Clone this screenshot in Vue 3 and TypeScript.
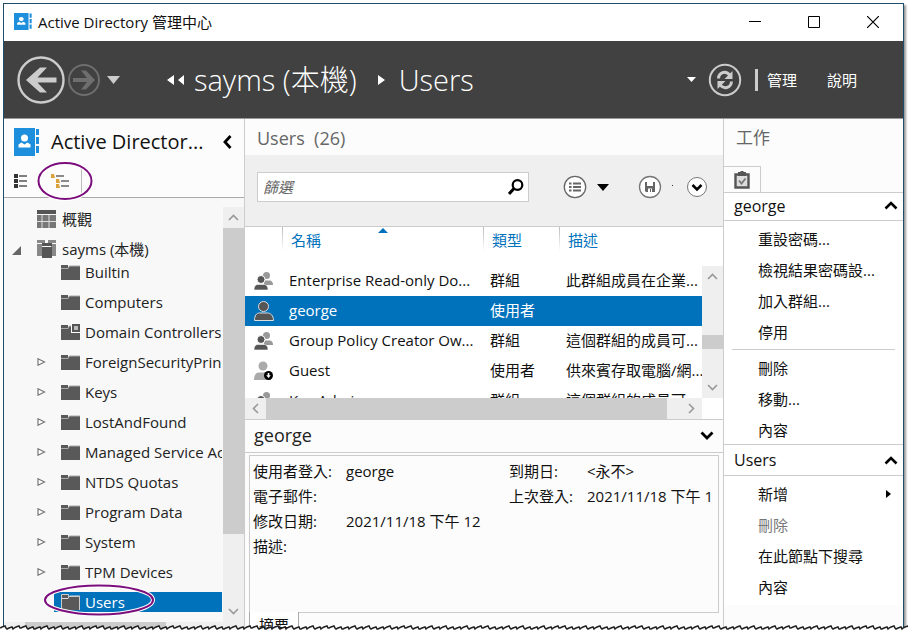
<script setup lang="ts">
import { ref } from 'vue'

interface TreeNode {
  name: string
  expandable: boolean
  controller?: boolean
}
interface DirectoryEntry {
  name: string
  kind: 'group' | 'user' | 'disabled'
  type: string
  description: string
}
interface Task {
  label: string
  disabled?: boolean
  submenu?: boolean
}

const nodes: TreeNode[] = [
  { name: 'Builtin', expandable: false },
  { name: 'Computers', expandable: false },
  { name: 'Domain Controllers', expandable: false, controller: true },
  { name: 'ForeignSecurityPrincipals', expandable: true },
  { name: 'Keys', expandable: true },
  { name: 'LostAndFound', expandable: true },
  { name: 'Managed Service Accounts', expandable: true },
  { name: 'NTDS Quotas', expandable: true },
  { name: 'Program Data', expandable: true },
  { name: 'System', expandable: true },
  { name: 'TPM Devices', expandable: true },
  { name: 'Users', expandable: false },
]
const currentNode = ref('Users')

const entries: DirectoryEntry[] = [
  { name: 'Enterprise Read-only Do...', kind: 'group', type: '群組', description: '此群組成員在企業...' },
  { name: 'george', kind: 'user', type: '使用者', description: '' },
  { name: 'Group Policy Creator Ow...', kind: 'group', type: '群組', description: '這個群組的成員可...' },
  { name: 'Guest', kind: 'disabled', type: '使用者', description: '供來賓存取電腦/網...' },
  { name: 'Key Admins', kind: 'group', type: '群組', description: '這個群組的成員可...' },
]
const currentEntry = ref('george')
const filter = ref('')

const entryTasks: Task[][] = [
  [{ label: '重設密碼...' }, { label: '檢視結果密碼設...' }, { label: '加入群組...' }, { label: '停用' }],
  [{ label: '刪除' }, { label: '移動...' }, { label: '內容' }],
]
const nodeTasks: Task[] = [
  { label: '新增', submenu: true },
  { label: '刪除', disabled: true },
  { label: '在此節點下搜尋' },
  { label: '內容' },
]

// Ragged line along the bottom of the window, long enough for wide screens.
const jitter = [0, 1, 0, 0, 1, 1, 0, 1, 0, 1, 1]
const tear = Array.from({ length: 560 }, (_, i) => {
  const x = i * 7
  const y = 4 + jitter[i % jitter.length]
  return `${x},${y} ${x + 2},${y - 1} ${x + 5},${y - 2} ${x + 6},${y}`
}).join(' ')
</script>

<template>
  <div class="page">
    <div class="window">
      <header class="titlebar">
        <svg class="book" width="18" height="17" viewBox="0 0 26 28" preserveAspectRatio="none">
          <path fill="#1e8fdc" d="M0 0h21v28H0zM22.500 1h3v7h-3zM22.500 10h3v7h-3zM22.500 19h3v7h-3z" />
          <circle cx="10.500" cy="10" r="3.500" fill="#fff" /><path fill="#fff" d="M4.500 19.500v-3l3-2 3 2 3-2 3 2v3z" />
        </svg>
        <h1>Active Directory 管理中心</h1>
        <div class="controls">
          <button aria-label="最小化"><svg width="12" height="12"><path d="M0 5.500h12" stroke="#000" /></svg></button>
          <button aria-label="最大化"><svg width="12" height="12"><path d="M.5.5h11v11H.5z" fill="none" stroke="#000" /></svg></button>
          <button aria-label="關閉"><svg width="12" height="12"><path d="M0 0l12 12M12 0L0 12" stroke="#000" stroke-width="1.200" /></svg></button>
        </div>
      </header>

      <nav class="banner">
        <button aria-label="上一頁">
          <svg width="48" height="48" viewBox="0 0 48 48"><circle cx="24" cy="24" r="22.500" fill="none" stroke="#ccc" stroke-width="2.400" /><path d="M9 24L23 11.500h7L20.500 21.500H39.500v5H20.500l9.500 10h-7z" fill="#ccc" /></svg>
        </button>
        <button aria-label="下一頁" class="forward">
          <svg width="34" height="34" viewBox="0 0 34 34"><circle cx="17" cy="17" r="15" fill="none" stroke="#6e6e6e" stroke-width="2" /><path d="M28 17l-9 9.500h-5l6-7.500H6v-4h14l-6-7.500h5z" fill="#6e6e6e" /></svg>
        </button>
        <button aria-label="瀏覽記錄" class="history"><svg width="13" height="8"><path d="M0 0h13L6.500 8z" fill="#ccc" /></svg></button>
        <div class="crumbs">
          <svg width="17" height="10"><path d="M7 0v10L0 5zM17 0v10l-6-5z" fill="#fff" /></svg>
          <a href="#sayms">sayms (本機)</a>
          <svg class="next" width="7" height="10"><path d="M0 0l7 5-7 5z" fill="#fff" /></svg>
          <a href="#users">Users</a>
        </div>
        <button aria-label="路徑" class="path"><svg width="9" height="5"><path d="M0 0h9L4.500 5z" fill="#fff" /></svg></button>
        <button aria-label="重新整理">
          <svg width="34" height="34" viewBox="0 0 34 34"><circle cx="17" cy="17" r="15.200" fill="none" stroke="#ccc" stroke-width="2" /><g fill="none" stroke="#ccc" stroke-width="3"><path d="M10.500 15.500c.5-7 8-8 11.500-3M23.500 18.500c-.5 7-8 8-11.500 3" /></g><path d="M24.500 8v8h-8zM9.500 26v-8h8z" fill="#ccc" /></svg>
        </button>
        <i class="bar"></i>
        <button class="menu">管理</button>
        <button class="menu last">說明</button>
      </nav>

      <div class="body">
        <aside class="sidebar">
          <div class="side-title">
            <svg width="26" height="28" viewBox="0 0 26 28">
              <path fill="#1e8fdc" d="M0 0h21v28H0zM22 1h3v6h-3zM22 9h3v7h-3zM22 18h3v7h-3z" />
              <circle cx="10.500" cy="10" r="3.500" fill="#fff" /><path fill="#fff" d="M4.500 19.500v-3l3-2 3 2 3-2 3 2v3z" />
            </svg>
            <h2>Active Director...</h2>
            <button aria-label="摺疊"><svg width="9" height="14"><path d="M7.500 1L2 7l5.500 6" fill="none" stroke="#000" stroke-width="2.800" /></svg></button>
          </div>
          <div class="views">
            <button aria-label="清單檢視"><svg width="14" height="14"><path d="M0 0h4v4H0zM0 5h4v4H0zM0 10h4v4H0z" fill="#333" /><path d="M5 2h8M5 7h8M5 12h8" stroke="#555" stroke-width="1.500" /></svg></button>
            <button aria-label="樹狀檢視" class="tree-view">
              <svg width="18" height="15"><path d="M0 0h3l1 4H0zM5 5h3l1 4H5zM5 10h3l1 4H5z" fill="#dba23c" /><path d="M5 2h8M10 7h8M10 12h8" stroke="#666" stroke-width="1.500" /></svg>
            </button>
            <svg class="ring" width="58" height="40"><ellipse cx="29" cy="20" rx="26.500" ry="18" fill="none" stroke="#fff" stroke-width="4" /><ellipse cx="29" cy="20" rx="26.500" ry="18" fill="none" stroke="#7b0d7d" stroke-width="2" /></svg>
          </div>
          <div class="tree-area">
            <div class="tree">
              <button class="root">
                <svg width="19" height="18"><path d="M0 0h19v4H0z" fill="#555" /><path d="M0 5h19v13H0z" fill="#777" /><path d="M5 5v13M12 5v13M0 11.500h19" stroke="#ddd" /></svg>
                <span>概觀</span>
              </button>
              <button class="root">
                <svg class="open" width="9" height="9"><path d="M9 0v9H0z" fill="#666" /></svg>
                <svg width="19" height="18"><path d="M0 0h8v3H0zM0 4h5v12H0zM11 0h8v3h-8zM14 4h5v12h-5z" fill="#888" /><path d="M5 3h10v3H5zM5 7h10v11H5z" fill="#555" /></svg>
                <span>sayms (本機)</span>
              </button>
              <ul>
                <li v-for="node in nodes" :key="node.name">
                  <svg v-if="node.expandable" class="twist" width="9" height="8"><path d="M1 .8L7.500 4 1 7.200z" fill="#fff" stroke="#777" stroke-width="1.200" /></svg>
                  <button :class="['leaf', { current: node.name === currentNode }]" @click="currentNode = node.name">
                    <svg width="19" height="16">
                      <path d="M0 1h7v3H0zM8 2h11v14H0V5h7z" fill="#595959" />
                      <path d="M0 4.500h7L8.500 2H19" fill="none" :stroke="node.name === currentNode ? '#ddd' : '#aaa'" />
                      <path v-if="node.name === currentNode" d="M.5 16V.5h7v2h11V16" fill="none" stroke="#ccc" />
                      <template v-if="node.controller"><path d="M10 0h9v9h-9z" fill="#fff" /><path d="M11 0h8v8h-8z" fill="#555" /><path d="M13 2h4v4h-4z" fill="#bbb" /></template>
                    </svg>
                    <span>{{ node.name }}</span>
                  </button>
                </li>
              </ul>
              <svg class="ring users" width="114" height="34"><ellipse cx="57" cy="17" rx="54" ry="14.500" fill="none" stroke="#fff" stroke-width="4" /><ellipse cx="57" cy="17" rx="54" ry="14.500" fill="none" stroke="#7b0d7d" stroke-width="2" /></svg>
            </div>
            <div class="vscroll side">
              <span class="arrow"><svg width="11" height="7"><path d="M1 6l4.500-4.500L10 6" /></svg></span>
              <i class="thumb"></i>
              <span class="arrow end"><svg width="11" height="7"><path d="M1 1l4.500 4.500L10 1" /></svg></span>
            </div>
          </div>
          <div class="hscroll-side"><i></i></div>
        </aside>

        <main class="main">
          <h2 class="heading">Users&nbsp; (26)</h2>
          <div class="toolbar">
            <label class="search">
              <input v-model="filter" type="text" placeholder="篩選" aria-label="篩選" />
              <svg width="16" height="16"><circle cx="9.500" cy="6" r="4.800" fill="none" stroke="#000" stroke-width="2.200" /><path d="M6 9.500L1 15" stroke="#000" stroke-width="3" /></svg>
            </label>
            <button aria-label="檢視"><svg width="24" height="24"><circle cx="12" cy="12" r="10.700" fill="#fff" stroke="#666" stroke-width="1.300" /><path d="M6 8.500h2.500M6 12h2.500M6 15.500h2.500M10 8.500h8M10 12h8M10 15.500h8" stroke="#666" stroke-width="2.200" /></svg></button>
            <button aria-label="檢視選項" class="drop"><svg width="12" height="7"><path d="M0 0h12L6 7z" fill="#000" /></svg></button>
            <button aria-label="儲存"><svg width="24" height="24"><circle cx="12" cy="12" r="10.500" fill="#fff" stroke="#777" stroke-width="1.300" /><path d="M7 7h10v10H8l-1-1z" fill="#666" /><path d="M9 7h6v4H9zM10 13.500h4V17h-4z" fill="#fff" /><path d="M12 14h1v3h-1z" fill="#666" /></svg></button>
            <i class="dot"></i>
            <button aria-label="展開"><svg width="22" height="22"><circle cx="11" cy="11" r="9.500" fill="#fff" stroke="#777" /><path d="M6.500 9l4.500 4.500L15.500 9" fill="none" stroke="#000" stroke-width="2.600" /></svg></button>
          </div>

          <section class="list">
            <div class="list-view">
              <table>
                <colgroup><col class="c-icon" /><col class="c-name" /><col class="c-type" /><col /></colgroup>
                <thead>
                  <tr>
                    <th aria-label="圖示"></th>
                    <th>名稱<svg class="sort" width="10" height="5"><path d="M5 0l5 5H0z" fill="#0072bc" /></svg></th>
                    <th>類型</th>
                    <th>描述</th>
                  </tr>
                </thead>
                <tbody>
                  <tr v-for="entry in entries" :key="entry.name" :class="{ selected: entry.name === currentEntry }" @click="currentEntry = entry.name">
                    <td class="icon">
                      <svg v-if="entry.kind === 'group'" width="20" height="20"><g fill="#999"><circle cx="12.500" cy="4.500" r="3.500" /><path d="M10 14V9.500h5c3 0 4 2 4 4.500z" /></g><g fill="#555"><circle cx="7" cy="8.500" r="4" stroke="#fff" /><path d="M0 19c0-4 2-5.500 4-5.500h6c2 0 4 1.500 4 5.500z" stroke="#fff" stroke-width=".6" /></g></svg>
                      <svg v-else-if="entry.kind === 'user'" width="20" height="20"><g fill="#555" stroke="#ddd"><circle cx="9.500" cy="5.500" r="5" /><path d="M.5 19.500c0-5 2-7.500 5-7.500h8c3 0 6 2.500 6 7.500z" /></g></svg>
                      <svg v-else width="20" height="20"><g fill="#aaa"><circle cx="9" cy="5" r="4.500" /><path d="M0 19c0-5 2-7.500 5-7.500h8c2 0 4 2.500 4 7.500z" /></g><circle cx="14.500" cy="14.500" r="4.500" fill="#000" /><path d="M13.700 12h1.600v2.300h1.500L14.500 17l-2.300-2.700h1.500z" fill="#fff" /></svg>
                    </td>
                    <td>{{ entry.name }}</td>
                    <td>{{ entry.type }}</td>
                    <td>{{ entry.description }}</td>
                  </tr>
                </tbody>
              </table>
            </div>
            <div class="vscroll inner">
              <span class="arrow"><svg width="11" height="7"><path d="M1 6l4.500-4.500L10 6" /></svg></span>
              <i class="thumb"></i>
              <span class="arrow end"><svg width="11" height="7"><path d="M1 1l4.500 4.500L10 1" /></svg></span>
            </div>
            <div class="hscroll">
              <span class="arrow"><svg width="7" height="11"><path d="M6 1L1.500 5.500 6 10" /></svg></span>
              <i class="thumb"></i>
              <span class="arrow"><svg width="7" height="11"><path d="M1 1l4.500 4.500L1 10" /></svg></span>
            </div>
          </section>

          <section class="details">
            <div class="details-head">
              <h3>george</h3>
              <button aria-label="摺疊"><svg width="14" height="9"><path d="M1.500 1.500L7 7l5.500-5.500" fill="none" stroke="#000" stroke-width="2.800" /></svg></button>
            </div>
            <div class="details-box">
              <dl>
                <dt>使用者登入:</dt><dd>george</dd>
                <dt>電子郵件:</dt><dd></dd>
                <dt>修改日期:</dt><dd>2021/11/18 下午 12</dd>
                <dt>描述:</dt><dd></dd>
              </dl>
              <dl class="second">
                <dt>到期日:</dt><dd>&lt;永不&gt;</dd>
                <dt>上次登入:</dt><dd>2021/11/18 下午 1</dd>
              </dl>
            </div>
            <div class="tabs"><button>摘要</button></div>
          </section>
        </main>

        <aside class="tasks">
          <h2 class="heading">工作</h2>
          <div class="task-tab">
            <button aria-label="工作清單"><svg width="16" height="18"><path d="M1.500 3.500h13v13h-13z" fill="#ddd" stroke="#555" stroke-width="2.400" /><path d="M4 1h2l1-1h2l1 1h2v4H4z" fill="#555" /><path d="M5 9.500l2.500 3 4-5" fill="none" stroke="#777" stroke-width="1.800" /></svg></button>
          </div>
          <div class="task-head"><h3>george</h3><button aria-label="摺疊"><svg width="14" height="9"><path d="M1.500 7.500L7 2l5.500 5.500" fill="none" stroke="#000" stroke-width="2.600" /></svg></button></div>
          <div class="task-list">
            <ul v-for="(group, index) in entryTasks" :key="index">
              <li v-for="task in group" :key="task.label"><button>{{ task.label }}</button></li>
            </ul>
          </div>
          <div class="task-head"><h3>Users</h3><button aria-label="摺疊"><svg width="14" height="9"><path d="M1.500 7.500L7 2l5.500 5.500" fill="none" stroke="#000" stroke-width="2.600" /></svg></button></div>
          <div class="task-list">
            <ul>
              <li v-for="task in nodeTasks" :key="task.label">
                <button :disabled="task.disabled">{{ task.label }}<svg v-if="task.submenu" width="5" height="8"><path d="M0 0l5 4-5 4z" fill="#000" /></svg></button>
              </li>
            </ul>
          </div>
        </aside>
      </div>
    </div>
    <svg class="tear" width="100%" height="8"><polygon :points="`0,8 ${tear} 3920,8`" fill="#fff" /><polyline :points="tear" fill="none" stroke="#222" stroke-width="1.500" /></svg>
  </div>
</template>

<style>
body {
  margin: 0;
  background: #fff;
}
</style>

<style scoped>
* {
  box-sizing: border-box;
}
.page {
  position: relative;
  height: 100vh;
  padding: 3px 4px 0 3px;
  overflow: hidden;
  font: 15px/20px "Open Sans", "Noto Sans CJK TC", sans-serif;
  color: #111;
}
.window {
  display: flex;
  flex-direction: column;
  height: 100%;
  border: 1px solid #1f4e6b;
  border-bottom: 0;
  box-shadow: 2px 2px 2px #999;
  background: #fcfcfc;
}
h1, h2, h3, ul, dl, dd {
  margin: 0;
  padding: 0;
  font-size: 15px;
  font-weight: 400;
}
ul {
  list-style: none;
}
button {
  display: flex;
  align-items: center;
  padding: 0;
  border: 0;
  background: none;
  font: inherit;
  color: inherit;
  white-space: nowrap;
}
svg {
  display: block;
  flex: none;
}
.titlebar {
  display: flex;
  align-items: center;
  flex: 0 0 37px;
  padding: 0 24px 2px 10px;
  background: #fff;
}
.titlebar h1 {
  flex: 1;
  margin-left: 6px;
}
.controls {
  display: flex;
  gap: 47px;
}
.banner {
  display: flex;
  align-items: center;
  flex: 0 0 77px;
  padding: 0 46px 0 13px;
  background: #414141;
  color: #fff;
}
.forward {
  margin-left: 2px;
}
.history {
  margin-left: 6px;
}
.crumbs {
  display: flex;
  align-items: center;
  flex: 1;
  margin-left: 47px;
  min-width: 0;
  font-size: 29px;
  line-height: 40px;
  font-weight: 300;
  white-space: nowrap;
}
.crumbs a {
  margin-left: 10px;
  color: #fff;
  text-decoration: none;
}
.next {
  margin: 0 4px 0 21px;
}
.path {
  margin-right: 12px;
}
.bar {
  width: 3px;
  height: 22px;
  margin: 0 9px 0 13px;
  background: #ccc;
}
.menu.last {
  margin-left: 30px;
}
.body {
  display: flex;
  flex: 1;
  min-height: 0;
  border-top: 1px solid #999;
}
.sidebar {
  display: flex;
  flex-direction: column;
  flex: 0 0 241px;
  min-width: 0;
  border-right: 1px solid #ccc;
}
.side-title {
  display: flex;
  align-items: center;
  height: 46px;
  padding: 0 12px 0 10px;
}
.side-title h2 {
  flex: 1;
  margin-left: 11px;
  font-size: 20px;
  line-height: 28px;
  white-space: nowrap;
}
.views {
  position: relative;
  display: flex;
  align-items: center;
  height: 33px;
  padding-left: 10px;
  border-bottom: 1px solid #aaa;
}
.tree-view {
  width: 40px;
  height: 28px;
  margin-left: 14px;
  padding-left: 9px;
  border-right: 1px solid #bbb;
}
.ring {
  position: absolute;
  left: 32px;
  top: -4px;
}
.ring.users {
  left: 38px;
  bottom: 5px;
  top: auto;
}
.tree-area {
  display: flex;
  flex: 1;
  min-height: 0;
  padding-top: 9px;
  background: #f8f8f8;
}
.tree {
  position: relative;
  flex: 1;
  min-width: 0;
  overflow: hidden;
  padding-top: 4px;
  color: #222;
}
.tree ul {
  padding-right: 1px;
}
.root {
  gap: 6px;
  width: 100%;
  height: 16px;
  padding-left: 33px;
}
.root + .root {
  position: relative;
  margin-top: 14px;
}
.open {
  position: absolute;
  left: 8px;
  top: 5px;
}
.tree li {
  position: relative;
  height: 30px;
  padding-left: 50px;
}
.twist {
  position: absolute;
  left: 33px;
  top: 11px;
}
.leaf {
  gap: 5px;
  width: 100%;
  height: 30px;
  padding-left: 7px;
  overflow: hidden;
}
.tree li:last-child .leaf {
  height: 20px;
  margin-top: 5px;
}
.leaf.current {
  background: #0072bc;
  color: #fff;
}
.vscroll {
  display: flex;
  flex-direction: column;
  width: 21px;
  background: #efefef;
}
.arrow {
  display: flex;
  align-items: center;
  justify-content: center;
  flex: 0 0 21px;
}
.arrow path {
  fill: none;
  stroke: #999;
  stroke-width: 1.600;
}
.thumb {
  background: #ccc;
}
.side {
  flex: 0 0 21px;
}
.side .thumb {
  flex: 0 1 306px;
}
.end {
  margin-top: auto;
}
.hscroll-side {
  flex: 0 0 10px;
  padding-left: 21px;
  background: #efefef;
}
.hscroll-side i {
  display: block;
  width: 141px;
  height: 100%;
  background: #ccc;
}
.main {
  display: flex;
  flex-direction: column;
  flex: 1;
  min-width: 0;
}
.heading {
  flex: none;
  height: 36px;
  padding: 5px 12px;
  font-size: 17px;
  line-height: 28px;
  color: #666;
}
.main .heading {
  font-size: 18px;
}
.toolbar {
  display: flex;
  align-items: center;
  flex: 0 0 72px;
  padding: 0 15px 7px 12px;
  border-bottom: 1px solid #ccc;
  background: #efefef;
}
.search {
  display: flex;
  align-items: center;
  flex: 1;
  height: 30px;
  margin-right: 34px;
  padding-right: 4px;
  border: 1px solid #ccc;
  background: #fff;
}
.search input {
  flex: 1;
  min-width: 0;
  padding: 0 5px;
  border: 0;
  outline: 0;
  background: none;
  font: inherit;
}
.search input::placeholder {
  color: #666;
  font-style: italic;
  opacity: 1;
}
.drop {
  margin: 0 29px 0 10px;
}
.dot {
  width: 1px;
  height: 1px;
  margin: 0 13px 4px 10px;
  background: #333;
}
.list {
  display: grid;
  grid-template: 171px 21px / minmax(0, 1fr) 21px;
  flex: none;
  border-bottom: 1px solid #ccc;
  background: #fff;
}
.list-view {
  overflow: hidden;
}
table {
  width: 100%;
  border-collapse: collapse;
  table-layout: fixed;
  text-align: left;
}
.c-icon {
  width: 37px;
}
.c-name {
  width: 201px;
}
.c-type {
  width: 76px;
}
th, td {
  overflow: hidden;
  padding: 0 0 2px 7px;
  white-space: nowrap;
}
th {
  position: relative;
  height: 39px;
  padding: 0 0 14px 9px;
  font-weight: 400;
  color: #0072bc;
  background: linear-gradient(#bbb, #fff) 0 0 / 1px 24px no-repeat;
}
th:first-child {
  background: none;
}
.sort {
  position: absolute;
  left: 96px;
  top: 1px;
}
td {
  height: 30px;
}
td.icon {
  padding: 0 0 0 9px;
}
.selected {
  background: #0072bc;
  color: #fff;
}
.inner {
  margin-top: 39px;
}
.inner .thumb {
  height: 14px;
  margin-top: auto;
}
.inner .end {
  margin-top: 28px;
}
.hscroll {
  display: flex;
  background: #efefef;
}
.hscroll .thumb {
  flex: 1;
  margin-right: 14px;
}
.details {
  display: flex;
  flex-direction: column;
  flex: 1;
  min-height: 0;
}
.details-head {
  display: flex;
  align-items: center;
  justify-content: space-between;
  flex: 0 0 33px;
  padding: 0 9px 2px;
  border-bottom: 1px solid #ccc;
}
.details-head h3 {
  font-size: 18px;
  color: #222;
}
.details-box {
  display: flex;
  gap: 24px;
  flex: 1;
  min-height: 0;
  margin: 2px 4px 0 4px;
  padding: 3px;
  border: 1px solid #ccc;
  overflow: hidden;
}
dl {
  display: grid;
  grid-template-columns: 93px minmax(0, 1fr);
  align-content: start;
  flex: 0 0 232px;
  line-height: 25px;
}
dl.second {
  grid-template-columns: 78px minmax(0, 1fr);
  flex: 1;
}
dt, dd {
  height: 25px;
  white-space: nowrap;
}
.tabs {
  display: flex;
  flex: 0 0 19px;
  min-height: 0;
  padding-left: 4px;
}
.tabs button {
  align-items: flex-start;
  width: 50px;
  height: 28px;
  margin-top: -1px;
  padding: 3px 9px;
  border: 1px solid #aaa;
  border-top: 0;
  background: #fff;
}
.tasks {
  flex: 0 0 180px;
  border-left: 1px solid #ccc;
}
.task-tab {
  height: 38px;
  padding-top: 11px;
  border-bottom: 1px solid #ccc;
}
.task-tab button {
  justify-content: center;
  width: 37px;
  height: 26px;
  border: 1px solid #ccc;
  border-width: 1px 1px 0 0;
}
.task-head {
  display: flex;
  align-items: center;
  justify-content: space-between;
  height: 28px;
  padding: 0 5px 2px 10px;
  border-bottom: 1px solid #ccc;
  background: #fff;
}
.task-head h3 {
  font-size: 16px;
}
.task-list {
  padding: 4px 0 1px;
  background: #fff;
}
.task-list:last-child {
  padding-bottom: 5px;
}
.task-list + .task-head {
  height: 32px;
  padding-bottom: 0;
  border-top: 1px solid #ccc;
}
.task-list ul {
  display: grid;
  gap: 4px;
}
.task-list ul + ul {
  margin-top: 4px;
}
.task-list ul + ul::before {
  content: "";
  margin: 0 8px;
  border-top: 1px solid #ccc;
}
.task-list li button {
  width: 100%;
  height: 27px;
  padding: 0 12px 0 34px;
}
.task-list li svg {
  margin-left: auto;
}
.task-list button:disabled {
  color: #777;
}
.tear {
  position: absolute;
  left: 0;
  bottom: 0;
}
</style>
